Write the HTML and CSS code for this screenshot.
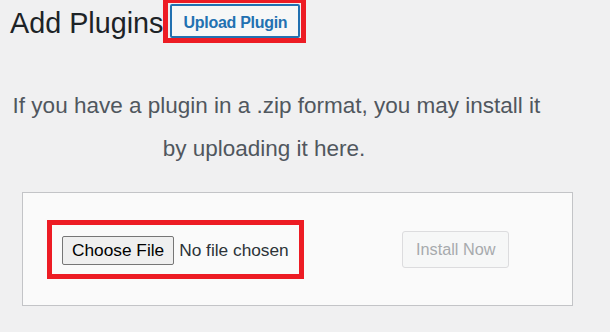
FILE: index.html
```
<!DOCTYPE html>
<html lang="en">
<head>
<meta charset="utf-8">
<title>Add Plugins</title>
<link rel="stylesheet" href="styles.css">
</head>
<body>
<div class="wrap">
  <div class="title-row">
    <h1 class="page-title">Add Plugins</h1>
    <span class="mark mark-upload">
      <button type="button" class="upload-btn">Upload Plugin</button>
    </span>
  </div>
  <p class="install-help">
    <span class="line">If you have a plugin in a .zip format, you may install it</span>
    <span class="line line-2">by uploading it here.</span>
  </p>
  <form class="upload-form">
    <span class="mark mark-file">
      <input type="file" class="file-input" name="pluginzip">
    </span>
    <button type="button" class="install-btn" disabled>Install Now</button>
  </form>
</div>
</body>
</html>
```
FILE: styles.css
```
* {
  box-sizing: border-box;
}

html, body {
  margin: 0;
  padding: 0;
  background: #f0f0f1;
}

body {
  width: 610px;
  height: 332px;
  overflow: hidden;
  font-family: "Liberation Sans", Arial, sans-serif;
  color: #1d2327;
}

.title-row {
  display: flex;
  align-items: flex-start;
}

.page-title {
  margin: 3px 0 0 10px;
  font-size: 28.75px;
  line-height: 40px;
  font-weight: 400;
  color: #1d2327;
  white-space: nowrap;
  flex-shrink: 0;
}

.mark {
  display: flex;
  flex-shrink: 0;
  border: 5px solid #ed1c24;
}

.mark-upload {
  margin-top: -2px;
  padding: 1px 1px 0 2px;
}

.upload-btn {
  height: 34px;
  width: 130px;
  padding: 3px 0 0;
  border: 2px solid #2271b1;
  border-radius: 2px;
  background: #f6f7f7;
  color: #2271b1;
  font-family: "Liberation Sans", Arial, sans-serif;
  font-size: 16px;
  font-weight: 700;
  letter-spacing: -0.3px;
  line-height: 1;
}

.install-help {
  margin: 41px 0 0;
  width: 553px;
  font-size: 22.5px;
  line-height: 43px;
  color: #50575e;
  text-align: center;
}

.line {
  display: block;
  white-space: nowrap;
}

.line-2 {
  padding-right: 25px;
}

.upload-form {
  margin: 22px 0 0 22px;
  width: 551px;
  height: 114px;
  display: flex;
  align-items: center;
  padding-left: 24px;
  background: #fafafa;
  border: 1px solid #c3c4c7;
}

.mark-file {
  padding: 11px 9px 9px 10px;
}

.file-input {
  width: 228px;
  height: 29px;
  margin: 0;
  padding: 0;
  font-family: "Liberation Sans", Arial, sans-serif;
  font-size: 17.3px;
  color: #2c3338;
  line-height: 29px;
}

.file-input::file-selector-button {
  height: 29px;
  margin: 0 5px 0 0;
  padding: 0 9px;
  border: 1px solid #767676;
  border-radius: 2px;
  background: #efefef;
  color: #000;
  font-family: "Liberation Sans", Arial, sans-serif;
  font-size: 17.3px;
}

.install-btn {
  margin-left: 98px;
  height: 37px;
  padding: 0 13px;
  border: 1px solid #dcdcde;
  border-radius: 3px;
  background: #f6f7f7;
  color: #a7aaad;
  font-family: "Liberation Sans", Arial, sans-serif;
  font-size: 16.25px;
  line-height: 1;
}
```
